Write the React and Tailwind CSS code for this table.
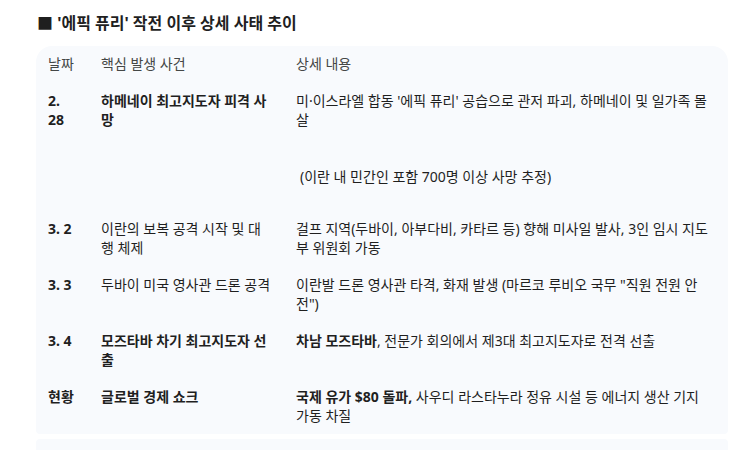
import React from "react";

const rows = [
  {
    date: "2. 28",
    event: "하메네이 최고지도자 피격 사망",
    eventBold: true,
    detail: (
      <>
        <p>미·이스라엘 합동 '에픽 퓨리' 공습으로 관저 파괴, 하메네이 및 일가족 몰살</p>
        <p className="mt-[38px] mb-[15px] pl-[4px]">(이란 내 민간인 포함 700명 이상 사망 추정)</p>
      </>
    ),
  },
  {
    date: "3. 2",
    event: "이란의 보복 공격 시작 및 대행 체제",
    detail: <p>걸프 지역(두바이, 아부다비, 카타르 등) 향해 미사일 발사, 3인 임시 지도부 위원회 가동</p>,
  },
  {
    date: "3. 3",
    event: "두바이 미국 영사관 드론 공격",
    detail: <p>이란발 드론 영사관 타격, 화재 발생 (마르코 루비오 국무 "직원 전원 안전")</p>,
  },
  {
    date: "3. 4",
    event: "모즈타바 차기 최고지도자 선출",
    eventBold: true,
    detail: (
      <p>
        <b className="font-bold">차남 모즈타바</b>, 전문가 회의에서 제3대 최고지도자로 전격 선출
      </p>
    ),
  },
  {
    date: "현황",
    event: "글로벌 경제 쇼크",
    eventBold: true,
    detail: (
      <p>
        <b className="font-bold">국제 유가 $80 돌파,</b> 사우디 라스타누라 정유 시설 등 에너지 생산 기지 가동 차질
      </p>
    ),
  },
];

const App = () => {
  return (
    <div
      className="min-h-[450px] bg-white pl-[36px] pr-[25px] pt-[11px] text-[#1f1f1f]"
      style={{ fontFamily: '"Noto Sans", "Noto Sans CJK KR", sans-serif' }}
    >
      {/* Title */}
      <h2 className="pl-[1px] text-[16px] font-bold leading-[24px]">
        ■ '에픽 퓨리' 작전 이후 상세 사태 추이
      </h2>

      {/* Table card */}
      <div className="mt-[11px] rounded-t-2xl rounded-b-[4px] bg-[#f8fafd] pl-[12px] pr-[16px] text-[14px] leading-[19px]">
        <div className="grid grid-cols-[53px_195px_1fr] pt-[8px] pb-[9px] text-[#444746]">
          <div>날짜</div>
          <div>핵심 발생 사건</div>
          <div>상세 내용</div>
        </div>
        {rows.map((row, index) => (
          <div key={index} className="grid grid-cols-[53px_195px_1fr] py-[9px]">
            <div className="w-[30px] font-bold">{row.date}</div>
            <div className={`w-[171px] ${row.eventBold ? "font-bold" : ""}`}>{row.event}</div>
            <div>{row.detail}</div>
          </div>
        ))}
      </div>

      {/* Next block */}
      <div className="mt-[5px] h-[20px] rounded-t-[4px] bg-[#f8fafd]" />
    </div>
  );
};

export default App;
